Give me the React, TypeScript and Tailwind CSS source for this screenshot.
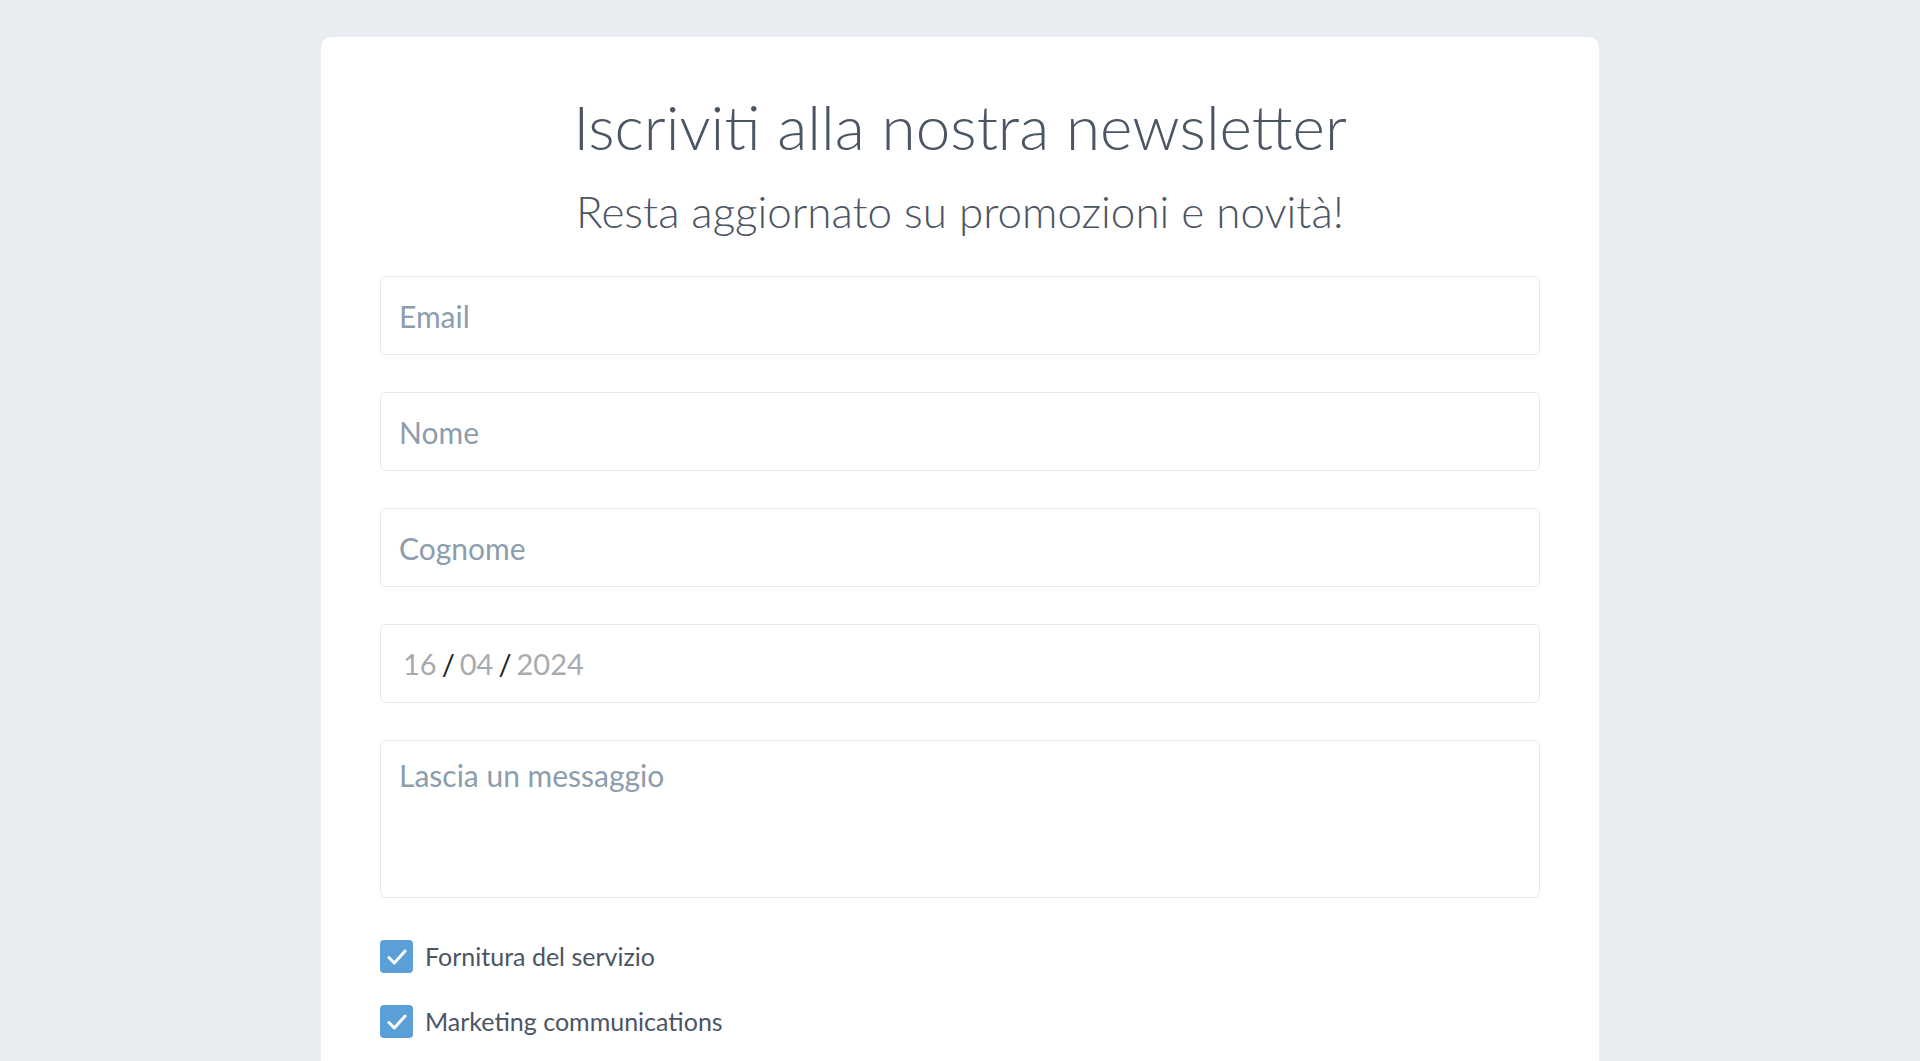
import { useState } from 'react';

const font = { fontFamily: 'Lato, "Open Sans", sans-serif' };

function Check({ label, checked, onToggle }: { label: string; checked: boolean; onToggle: () => void }) {
  return (
    <label className="flex items-center gap-[12px] cursor-pointer select-none" onClick={onToggle}>
      <span className={`flex h-[33px] w-[33px] items-center justify-center rounded-[4px] ${checked ? 'bg-[#5a9fd8]' : 'border border-gray-300 bg-white'}`}>
        {checked && (
          <svg viewBox="0 0 24 24" className="h-[26px] w-[26px]" fill="none" stroke="white" strokeWidth="2.8" strokeLinecap="round" strokeLinejoin="round">
            <path d="M4.5 12.5l5 5L19.5 6.5" />
          </svg>
        )}
      </span>
      <span className="text-[25px] leading-none text-[#4b5563]">{label}</span>
    </label>
  );
}

export default function App() {
  const [service, setService] = useState(true);
  const [marketing, setMarketing] = useState(true);

  const inputCls =
    'block h-[79px] w-full rounded-[6px] border border-[#e6e8eb] bg-white px-[18px] text-[30px] text-[#4b5563] outline-none placeholder:text-[#8c9dad]';

  return (
    <div className="min-h-screen bg-[#e9edf2] pt-[37px]" style={font}>
      <div className="mx-auto w-[1278px] rounded-t-[10px] bg-white px-[59px] pt-[52px] pb-[80px]">
        <h1 className="text-center text-[62px] font-light leading-[74px] text-[#4b5563]">Iscriviti alla nostra newsletter</h1>
        <p className="mt-[20px] text-center text-[44px] font-light leading-[56px] text-[#4b5563]">Resta aggiornato su promozioni e novità!</p>

        <form className="mt-[37px] flex flex-col gap-[37px]" onSubmit={e => e.preventDefault()}>
          <input type="email" placeholder="Email" className={inputCls} />
          <input type="text" placeholder="Nome" className={inputCls} />
          <input type="text" placeholder="Cognome" className={inputCls} />
          <div className="flex h-[79px] w-full items-center rounded-[6px] border border-[#e6e8eb] bg-white px-[22px] text-[29px] text-[#a7abb0]">
            <span>16</span>
            <span className="mx-[5px] text-[#222]">/</span>
            <span>04</span>
            <span className="mx-[5px] text-[#222]">/</span>
            <span>2024</span>
          </div>
          <textarea
            placeholder="Lascia un messaggio"
            className="block h-[158px] w-full resize-none rounded-[6px] border border-[#e6e8eb] bg-white px-[18px] py-[12px] text-[30px] text-[#4b5563] outline-none placeholder:text-[#8c9dad]"
          />
          <div className="flex flex-col gap-[32px] pt-[5px]">
            <Check label="Fornitura del servizio" checked={service} onToggle={() => setService(v => !v)} />
            <Check label="Marketing communications" checked={marketing} onToggle={() => setMarketing(v => !v)} />
          </div>
        </form>
      </div>
    </div>
  );
}
